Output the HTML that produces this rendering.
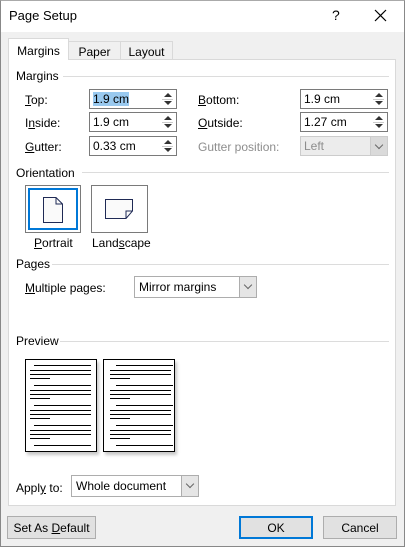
<!DOCTYPE html><html><head><style>
*{box-sizing:border-box;margin:0;padding:0}
body{width:405px;height:547px;background:#f0f0f0;font-family:"Liberation Sans",sans-serif;font-size:12px;color:#000;position:relative;overflow:hidden}
.a{position:absolute;white-space:nowrap}
.title{left:0;top:0;width:405px;height:32px;background:#fff}
.panel{left:8px;top:59px;width:388px;height:447px;background:#fff;border:1px solid #d9d9d9}
.tab{border:1px solid #d9d9d9;border-bottom:none;background:#f0f0f0;text-align:center}
.hdr{color:#000}
.line{height:1px;background:#dcdcdc}
.in{background:#fff;border:1px solid #7a7a7a;height:20px;padding:2px 0 0 3px}
.sp{border:1px solid #7a7a7a;border-left:none;background:#fff;width:17px;height:20px}
.sp:before,.sp:after{content:"";position:absolute;left:4px;border-left:4px solid transparent;border-right:4px solid transparent}
.sp:before{top:3px;border-bottom:4px solid #333}
.sp:after{top:11px;border-top:4px solid #333}
.sp i{position:absolute;left:2px;top:9px;width:11px;height:1px;background:#ccc}
.cb{background:#fff;border:1px solid #adadad;height:22px;padding:3px 0 0 4px}
.dd{position:absolute;right:0;top:0;width:17px;height:20px;background:#e5e5e5;border-left:1px solid #adadad}
.dd:after{content:"";position:absolute;left:5px;top:5px;width:5px;height:5px;border-right:1px solid #666;border-bottom:1px solid #666;transform:rotate(45deg)}
u{text-decoration:underline}
.btn{background:#e1e1e1;border:1px solid #adadad;height:23px;text-align:center;padding-top:4px}
.pg{background:#fff;border:1px solid #000;width:72px;height:93px;box-shadow:2px 3px 3px #c8c8c8}
.pg b{position:absolute;height:1px;background:#000}
</style></head><body>
<div class="a title"></div>
<div class="a" style="left:9px;top:8px;font-size:13px">Page Setup</div>
<div class="a" style="left:332px;top:7px;font-size:14px">?</div>
<svg class="a" style="left:374px;top:9px" width="13" height="13"><path d="M1 1L12 12M12 1L1 12" stroke="#000" stroke-width="1.2"/></svg>
<div class="a panel"></div>
<div class="a tab" style="left:68px;top:41px;width:53px;height:18px;padding-top:3px">Paper</div>
<div class="a tab" style="left:120px;top:41px;width:53px;height:18px;padding-top:3px">Layout</div>
<div class="a tab" style="left:8px;top:38px;width:61px;height:22px;background:#fff;padding-top:5px">Margins</div>

<div class="a hdr" style="left:16px;top:69px">Margins</div><div class="a line" style="left:63px;top:76px;width:326px"></div>
<div class="a" style="left:25px;top:93px"><u>T</u>op:</div>
<div class="a" style="left:25px;top:116px">I<u>n</u>side:</div>
<div class="a" style="left:25px;top:140px"><u>G</u>utter:</div>
<div class="a in" style="left:89px;top:89px;width:72px"><span style="background:#99c9ef">1.9 cm</span></div><div class="a sp" style="left:160px;top:89px"><i></i></div>
<div class="a in" style="left:89px;top:112px;width:72px">1.9 cm</div><div class="a sp" style="left:160px;top:112px"><i></i></div>
<div class="a in" style="left:89px;top:136px;width:72px">0.33 cm</div><div class="a sp" style="left:160px;top:136px"><i></i></div>
<div class="a" style="left:198px;top:93px"><u>B</u>ottom:</div>
<div class="a" style="left:198px;top:116px"><u>O</u>utside:</div>
<div class="a" style="left:198px;top:140px;color:#8d8d8d">Gutter position:</div>
<div class="a in" style="left:300px;top:89px;width:72px">1.9 cm</div><div class="a sp" style="left:371px;top:89px"><i></i></div>
<div class="a in" style="left:300px;top:112px;width:72px">1.27 cm</div><div class="a sp" style="left:371px;top:112px"><i></i></div>
<div class="a in" style="left:300px;top:136px;width:88px;background:#ececec;border-color:#ccc;color:#8d8d8d">Left<div class="dd" style="background:#dadada;border-color:#ccc;height:18px"></div></div>

<div class="a hdr" style="left:16px;top:166px">Orientation</div><div class="a line" style="left:82px;top:172px;width:307px"></div>
<div class="a" style="left:25px;top:185px;width:56px;height:48px;border:1px solid #7a7a7a;background:#fff"><div class="a" style="left:2px;top:2px;width:50px;height:42px;border:2px solid #0078d7"></div>
<svg class="a" style="left:16px;top:10px" width="22" height="28"><path d="M1.5 1.5H14L20.5 8V26.5H1.5Z" fill="#fafafa" stroke="#1f2a55"/><path d="M14 1.5V8H20.5" fill="none" stroke="#1f2a55"/></svg></div>
<div class="a" style="left:91px;top:185px;width:57px;height:48px;border:1px solid #7a7a7a;background:#fff">
<svg class="a" style="left:12px;top:12px" width="30" height="22"><path d="M1.5 1.5H28.5V13L22 20.5H1.5Z" fill="#fafafa" stroke="#1f2a55"/><path d="M22 20.5V13H28.5" fill="none" stroke="#1f2a55"/></svg></div>
<div class="a" style="left:34px;top:236px"><u>P</u>ortrait</div>
<div class="a" style="left:92px;top:236px">Land<u>s</u>cape</div>

<div class="a hdr" style="left:16px;top:257px">Pages</div><div class="a line" style="left:52px;top:264px;width:337px"></div>
<div class="a" style="left:25px;top:281px"><u>M</u>ultiple pages:</div>
<div class="a cb" style="left:134px;top:276px;width:123px">Mirror margins<div class="dd"></div></div>

<div class="a hdr" style="left:16px;top:334px">Preview</div><div class="a line" style="left:60px;top:341px;width:329px"></div>
<div class="a pg" style="left:25px;top:359px">
<b style="left:8px;top:5px;width:57px"></b><b style="left:4px;top:10px;width:61px"></b><b style="left:4px;top:14px;width:61px"></b><b style="left:4px;top:18px;width:20px"></b>
<b style="left:8px;top:25px;width:57px"></b><b style="left:4px;top:30px;width:61px"></b><b style="left:4px;top:34px;width:61px"></b><b style="left:4px;top:38px;width:20px"></b>
<b style="left:8px;top:45px;width:57px"></b><b style="left:4px;top:50px;width:61px"></b><b style="left:4px;top:54px;width:61px"></b><b style="left:4px;top:58px;width:20px"></b>
<b style="left:8px;top:65px;width:57px"></b><b style="left:4px;top:70px;width:61px"></b><b style="left:4px;top:74px;width:61px"></b><b style="left:4px;top:78px;width:20px"></b>
<b style="left:8px;top:85px;width:57px"></b></div>
<div class="a pg" style="left:103px;top:359px">
<b style="left:12px;top:5px;width:57px"></b><b style="left:6px;top:10px;width:61px"></b><b style="left:6px;top:14px;width:61px"></b><b style="left:6px;top:18px;width:20px"></b>
<b style="left:12px;top:25px;width:57px"></b><b style="left:6px;top:30px;width:61px"></b><b style="left:6px;top:34px;width:61px"></b><b style="left:6px;top:38px;width:20px"></b>
<b style="left:12px;top:45px;width:57px"></b><b style="left:6px;top:50px;width:61px"></b><b style="left:6px;top:54px;width:61px"></b><b style="left:6px;top:58px;width:20px"></b>
<b style="left:12px;top:65px;width:57px"></b><b style="left:6px;top:70px;width:61px"></b><b style="left:6px;top:74px;width:61px"></b><b style="left:6px;top:78px;width:20px"></b>
<b style="left:12px;top:85px;width:57px"></b></div>

<div class="a" style="left:16px;top:481px">Appl<u>y</u> to:</div>
<div class="a cb" style="left:71px;top:475px;width:128px">Whole document<div class="dd"></div></div>

<div class="a btn" style="left:7px;top:516px;width:89px">Set As <u>D</u>efault</div>
<div class="a btn" style="left:239px;top:516px;width:74px;border:2px solid #0078d7;padding-top:3px">OK</div>
<div class="a btn" style="left:323px;top:516px;width:74px">Cancel</div>
<div class="a" style="left:0;top:0;width:405px;height:547px;border:1px solid #888;border-top-color:#aaa"></div>
</body></html>
